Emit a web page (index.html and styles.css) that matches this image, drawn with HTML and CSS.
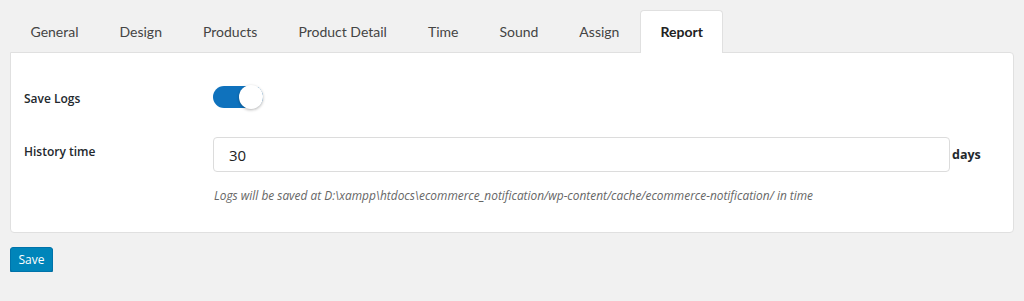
FILE: index.html
```html
<!DOCTYPE html>
<html lang="en">
<head>
    <meta charset="UTF-8">
    <meta name="viewport" content="width=device-width, initial-scale=1.0">
    <title>Report Settings</title>
    <link rel="stylesheet" href="styles.css">
</head>
<body>
    <div class="wrap">
        <div class="tabs">
            <a class="tab">General</a>
            <a class="tab">Design</a>
            <a class="tab">Products</a>
            <a class="tab">Product Detail</a>
            <a class="tab">Time</a>
            <a class="tab">Sound</a>
            <a class="tab">Assign</a>
            <a class="tab active">Report</a>
        </div>

        <div class="panel">
            <div class="row row-toggle">
                <div class="label">Save Logs</div>
                <div class="field">
                    <span class="toggle"><span class="knob"></span></span>
                </div>
            </div>
            <div class="row row-history">
                <div class="label">History time</div>
                <div class="field">
                    <div class="input-line">
                        <input type="text" value="30">
                        <span class="unit">days</span>
                    </div>
                    <p class="help-text">Logs will be saved at D:\xampp\htdocs\ecommerce_notification/wp-content/cache/ecommerce-notification/ in time</p>
                </div>
            </div>
        </div>

        <button class="save">Save</button>
    </div>
</body>
</html>
```

FILE: styles.css
```css
body {
    margin: 0;
    background-color: #f1f1f1;
    font-family: "Open Sans", "Noto Sans", sans-serif;
    color: #32373c;
}
.wrap {
    padding: 10px 10px 0 10px;
}
.tabs {
    display: flex;
    height: 42px;
}
.tab {
    font-family: Lato, sans-serif;
    font-size: 14px;
    color: #444;
    padding: 0 19.5px;
    line-height: 42px;
    border: 1px solid transparent;
    border-bottom: none;
    border-radius: 4px 4px 0 0;
}
.tab.active {
    background: #ffffff;
    border-color: #e0e0e0;
    font-weight: bold;
    color: #222;
    position: relative;
    top: 1px;
    margin-top: -1px;
}
.panel {
    background: #ffffff;
    border: 1px solid #e0e0e0;
    border-radius: 0 4px 4px 4px;
    padding: 33px 14px 29px 13px;
}
.row {
    display: flex;
}
.label {
    width: 189px;
    font-size: 12px;
    font-weight: 600;
    color: #23282d;
}
.row-toggle {
    align-items: center;
}
.row-toggle .label {
    padding-top: 2px;
}
.row-history {
    margin-top: 29px;
}
.row-history .label {
    padding-top: 6px;
}
.field {
    flex: 1;
}
.toggle {
    display: block;
    width: 50px;
    height: 22px;
    border-radius: 11px;
    background: #0f72bd;
    position: relative;
}
.knob {
    position: absolute;
    right: 0;
    top: -1px;
    width: 24px;
    height: 24px;
    border-radius: 50%;
    background: #ffffff;
    box-shadow: 0 1px 3px rgba(0, 0, 0, 0.3);
}
.input-line {
    display: flex;
    align-items: center;
}
input {
    width: 737px;
    height: 35px;
    box-sizing: border-box;
    border: 1px solid #dcdcdc;
    border-radius: 4px;
    padding: 0 15px;
    font-family: "Open Sans", sans-serif;
    font-size: 15px;
    color: #222;
}
.unit {
    font-size: 12.5px;
    font-weight: bold;
    margin-left: 2px;
    color: #23282d;
}
.help-text {
    margin: 15px 0 0 1px;
    font-size: 11.9px;
    font-style: italic;
    color: #666;
}
.save {
    display: block;
    margin-top: 14px;
    background: #0085ba;
    border: 1px solid #0073aa;
    border-radius: 3px;
    color: #ffffff;
    font-family: "Open Sans", sans-serif;
    font-size: 12px;
    height: 25px;
    width: 43px;
    padding: 0;
    box-shadow: 0 1px 0 #006799;
}
```
